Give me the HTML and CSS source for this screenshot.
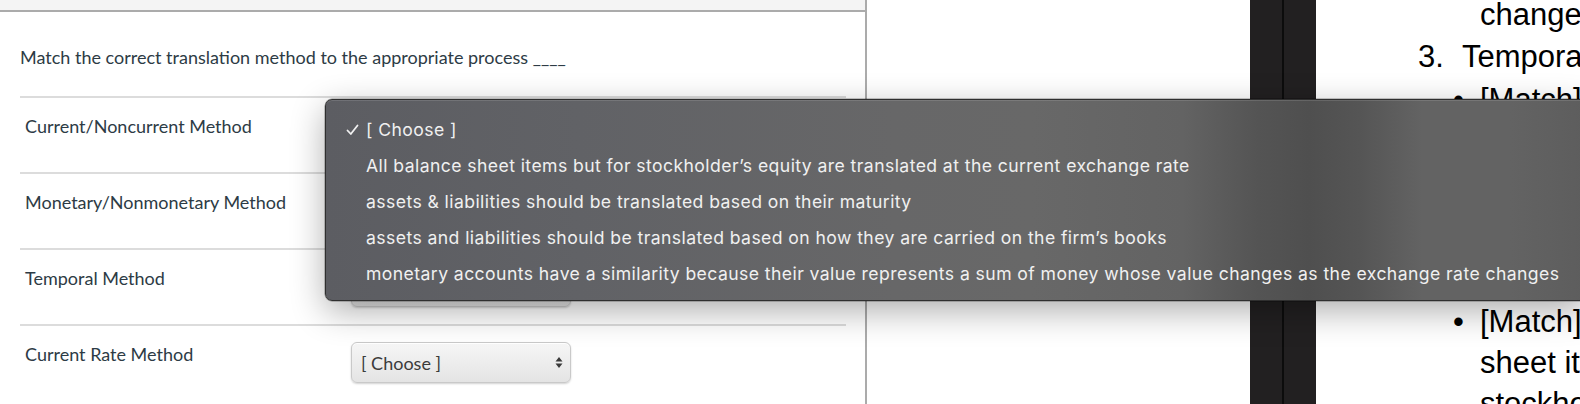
FILE: index.html
```html
<!DOCTYPE html>
<html>
<head>
<meta charset="utf-8">
<link rel="stylesheet" href="styles.css">
</head>
<body>
<div class="screen">
  <section class="quiz">
    <div class="topband"></div>
    <div class="quiz-body">
      <p class="question">Match the correct translation method to the appropriate process ____</p>
      <div class="row">
        <div class="label">Current/Noncurrent Method</div>
        <div class="select"><span>[ Choose ]</span><svg class="arrows" width="8" height="13" viewBox="0 0 8 13"><path d="M4 1 L7.5 5.5 H0.5 Z M4 12 L7.5 7.5 H0.5 Z" fill="#3a3a3a"/></svg></div>
      </div>
      <div class="row">
        <div class="label">Monetary/Nonmonetary Method</div>
        <div class="select"><span>[ Choose ]</span><svg class="arrows" width="8" height="13" viewBox="0 0 8 13"><path d="M4 1 L7.5 5.5 H0.5 Z M4 12 L7.5 7.5 H0.5 Z" fill="#3a3a3a"/></svg></div>
      </div>
      <div class="row">
        <div class="label">Temporal Method</div>
        <div class="select"><span>[ Choose ]</span><svg class="arrows" width="8" height="13" viewBox="0 0 8 13"><path d="M4 1 L7.5 5.5 H0.5 Z M4 12 L7.5 7.5 H0.5 Z" fill="#3a3a3a"/></svg></div>
      </div>
      <div class="row">
        <div class="label">Current Rate Method</div>
        <div class="select"><span>[ Choose ]</span><svg class="arrows" width="8" height="13" viewBox="0 0 8 13"><path d="M4 1 L7.5 5.5 H0.5 Z M4 12 L7.5 7.5 H0.5 Z" fill="#3a3a3a"/></svg></div>
      </div>
    </div>
  </section>
  <section class="gap"></section>
  <section class="darkbar">
    <div class="dcol"></div>
    <div class="dline"></div>
    <div class="dcol"></div>
  </section>
  <section class="notes">
    <div class="nline indent">changes as the exchange rate changes</div>
    <div class="nline num"><span class="n">3.</span><span>Temporal Method</span></div>
    <div class="item first">
      <div class="nline bullet"><span class="b">•</span><span>[Match] assets and</span></div>
      <div class="nline indent">liabilities should be</div>
      <div class="nline indent">translated based on</div>
      <div class="nline indent">how they are carried</div>
      <div class="nline indent">on the firm’s books</div>
    </div>
    <div class="item">
      <div class="nline bullet"><span class="b">•</span><span>[Match] All balance</span></div>
      <div class="nline indent">sheet items but for</div>
      <div class="nline indent">stockholder’s equity</div>
    </div>
  </section>

  <div class="menu">
    <div class="opt"><svg class="check" width="13" height="12" viewBox="0 0 13 12"><path d="M1.5 6.5 L4.8 10 L11.5 1.5" fill="none" stroke="#f0f0f0" stroke-width="1.8" stroke-linecap="round" stroke-linejoin="round"/></svg><span>[ Choose ]</span></div>
    <div class="opt"><span>All balance sheet items but for stockholder’s equity are translated at the current exchange rate</span></div>
    <div class="opt"><span>assets &amp; liabilities should be translated based on their maturity</span></div>
    <div class="opt"><span>assets and liabilities should be translated based on how they are carried on the firm’s books</span></div>
    <div class="opt"><span>monetary accounts have a similarity because their value represents a sum of money whose value changes as the exchange rate changes</span></div>
  </div>
</div>
</body>
</html>
```

FILE: styles.css
```css
* { box-sizing: border-box; }
html, body { margin: 0; padding: 0; background: #fff; }
body { width: 1580px; height: 404px; overflow: hidden; }

.screen {
  position: relative;
  display: flex;
  width: 1580px;
  height: 404px;
  overflow: hidden;
}

/* Left quiz panel */
.quiz {
  width: 867px;
  flex: none;
  border-right: 2px solid #ababab;
  font-family: Lato, "Liberation Sans", sans-serif;
  color: #2d3b45;
}
.topband {
  height: 12px;
  background: #f4f4f4;
  border-bottom: 2px solid #ababab;
}
.quiz-body {
  padding: 0 19px 0 20px;
}
.question {
  margin: 0;
  padding-top: 34px;
  height: 84px;
  font-size: 18px;
  line-height: 22px;
}
.row {
  display: flex;
  align-items: flex-start;
  height: 76px;
  border-top: 2px solid #dcdcdc;
  padding-left: 5px;
}
.label {
  width: 326px;
  padding-top: 17px;
  font-size: 18px;
  line-height: 22px;
}
.select {
  margin-top: 16px;
  width: 220px;
  height: 41px;
  display: flex;
  align-items: center;
  justify-content: space-between;
  padding: 0 7px 0 9px;
  border: 1px solid #c9c9c9;
  border-radius: 6px;
  background: linear-gradient(#f6f6f6, #e4e4e4);
  box-shadow: 0 1px 2px rgba(0,0,0,0.18), inset 0 1px 0 #fff;
  font-size: 18px;
  color: #3b3b3b;
}
.arrows { display: block; }

/* middle white area */
.gap { width: 383px; flex: none; background: #fff; }

/* dark divider */
.darkbar { display: flex; width: 66px; flex: none; }
.dcol { width: 32px; background: #222021; }
.dline { width: 2px; background: #0c0c0c; }

/* right notes panel */
.notes {
  flex: 1;
  min-width: 0;
  margin-top: -6px;
  font-family: "Liberation Sans", Arial, sans-serif;
  font-size: 31px;
  line-height: 41px;
  color: #000;
  white-space: nowrap;
  overflow: hidden;
}
.nline { height: 41px; }
.indent { padding-left: 164px; }
.num { display: flex; padding-left: 102px; margin-top: 1px; }
.num .n { width: 44px; flex: none; }
.item.first { margin-top: 2px; }
.item + .item { margin-top: 17px; }
.bullet { display: flex; padding-left: 137px; }
.bullet .b { width: 27px; flex: none; }

/* popup menu */
.menu {
  position: absolute;
  left: 325px;
  top: 99px;
  width: 1262px;
  height: 202px;
  padding: 12px 0 0 20px;
  border: 1px solid #2f2f2f;
  border-radius: 7px;
  background: linear-gradient(90deg,
    #5c5d62 0%,
    #616266 20%,
    #676768 45%,
    #686868 56%,
    #636363 68%,
    #545454 74%,
    #4f4f4f 78%,
    #555555 82%,
    #636363 87%,
    #636363 94%,
    #5d5d5d 100%);
  box-shadow: 0 10px 34px rgba(0,0,0,0.32), 0 0 0 0.5px rgba(0,0,0,0.4), inset 0 1px 0 rgba(255,255,255,0.12);
  font-family: Inter, "Noto Sans", sans-serif;
  font-size: 17.6px;
  color: #f0f0f0;
}
.opt {
  position: relative;
  height: 36px;
  line-height: 36px;
  padding-left: 20px;
  white-space: nowrap;
  letter-spacing: 0.42px;
}
.check {
  position: absolute;
  left: 0;
  top: 12px;
}
```
